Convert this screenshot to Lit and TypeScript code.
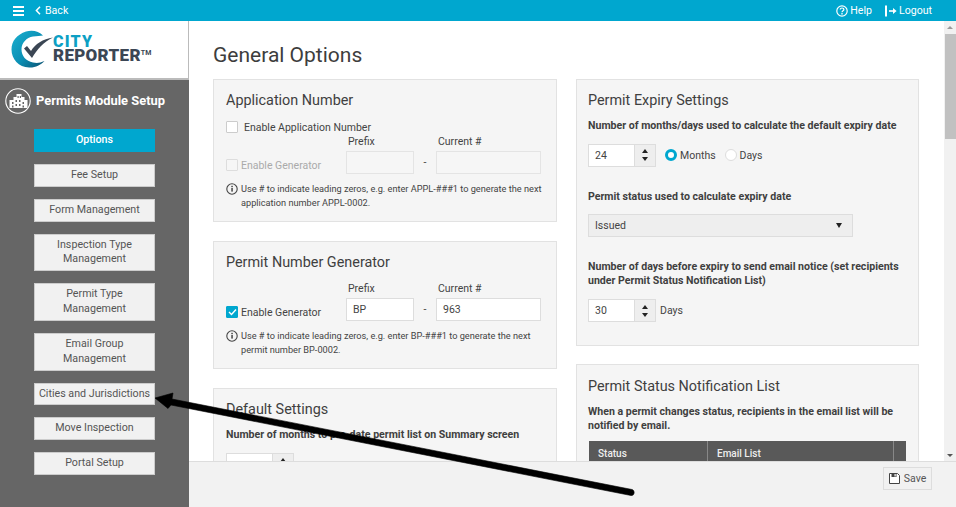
import { LitElement, html, css, svg } from "lit";
import { customElement } from "lit/decorators.js";

const info = html`<svg class="info" viewBox="0 0 12 12" width="12" height="12"><circle cx="6" cy="6" r="5.2" fill="none" stroke="#444" stroke-width="1.1"/><rect x="5.3" y="5" width="1.5" height="3.6" fill="#444"/><rect x="5.3" y="2.8" width="1.5" height="1.4" fill="#444"/></svg>`;

const stepper = (v: string) => html`<span class="num"><span class="numval">${v}</span><span class="step"><i class="up"></i><i class="down"></i></span></span>`;

@customElement("app-root")
export class AppRoot extends LitElement {
  static styles = css`
    :host { display: block; position: relative; width: 956px; height: 507px; overflow: hidden; background: #fff; font-family: Roboto, "Liberation Sans", sans-serif; font-size: 10.5px; color: #444; }
    * { box-sizing: border-box; }
    .top { height: 21px; background: #00a7cf; color: #fff; display: flex; align-items: center; padding: 0 24px 0 13px; font-size: 10.6px; }
    .burger { display: block; margin-right: 11px; }
    .back { display: flex; align-items: center; gap: 4px; }
    .spacer { flex: 1; }
    .tl { display: flex; align-items: center; gap: 2px; margin-left: 13px; }
    .body { display: flex; height: 486px; }
    .side { width: 189px; background: #666; flex: none; display: flex; flex-direction: column; }
    .logo { height: 59px; background: #fff; border-right: 1px solid #bbb; border-bottom: 2px solid #bbb; padding: 9px 0 0 11px; display: flex; }
    .logotext { margin-left: 0; font-weight: 900; line-height: 13.5px; padding-top: 5px; }
    .city { color: #0c9fc4; font-size: 16px; display: block; letter-spacing: 1.2px; }
    .rep { color: #3b4654; font-size: 17px; display: block; white-space: nowrap; letter-spacing: 0.3px; }
    .rep sup { font-size: 7px; font-weight: 700; vertical-align: 6px; line-height: 0; letter-spacing: 0; }
    .sidehead { display: flex; gap: 5px; padding: 8px 0 0 5px; color: #fff; font-weight: 700; font-size: 12.9px; height: 49px; align-items: flex-start; }
    .sidehead span { margin-top: 5px; }
    .btns { display: flex; flex-direction: column; gap: 12px; padding-left: 34px; }
    .btn { width: 121px; padding: 3px 2px; border: 1px solid #ccc; background: #f1f1f1; color: #555; text-align: center; font-size: 10.7px; line-height: 14.85px; }
    .btn.active { background: #00a7cf; border-color: #00a7cf; color: #fff; font-weight: 500; }
    .main { flex: 1; display: flex; flex-direction: column; min-width: 0; }
    .scrollwrap { height: 440px; display: flex; overflow: hidden; }
    .content { flex: 1; padding: 19px 0 0 24px; overflow: hidden; }
    h1 { margin: 0 0 9px; font-weight: 400; font-size: 21px; line-height: 30px; color: #3d3d3d; }
    .cols { display: flex; gap: 19px; align-items: flex-start; }
    .col { display: flex; flex-direction: column; }
    .col.l { width: 344px; gap: 19px; }
    .col.r { width: 343px; gap: 18px; }
    .card { background: #f5f5f5; border: 1px solid #e2e2e2; padding: 11px 11px 0 12px; }
    .col.r .card { padding-left: 11px; }
    .col.r .card.n2 { padding-top: 12px; }
    h3 { margin: 0; font-weight: 400; font-size: 14.4px; line-height: 20px; color: #3f3f3f; }
    .check { display: block; width: 12px; height: 12px; background: #fff; border: 1px solid #ccc; border-radius: 1px; flex: none; }
    .check.dis { background: #f6f6f6; border-color: #ddd; }
    .check.on { background: #00a7cf; border-color: #00a7cf; display: flex; align-items: center; justify-content: center; }
    .row1 { display: flex; align-items: center; gap: 6px; height: 14px; margin-top: 9px; }
    .gen { display: grid; grid-template-columns: 120px 68px 22px 105px; grid-template-rows: 14px 23px; row-gap: 3px; align-items: center; }
    .gen.m { margin-top: 8px; }
    .gen .lab { padding-left: 2px; }
    .gen .cb { grid-row: 2; display: flex; gap: 3px; align-items: center; margin-top: 5px; }
    .gen .cb.dis { color: #aaa; }
    .gen .dash { text-align: center; grid-row: 2; grid-column: 3; }
    .inp { grid-row: 2; height: 23px; background: #fff; border: 1px solid #ddd; padding: 0 6px; line-height: 21px; }
    .inp.dis { background: #f6f6f6; border-color: #e4e4e4; }
    .note { display: flex; gap: 3px; margin-top: 8px; font-size: 9.2px; line-height: 13.5px; padding-bottom: 12px; }
    .note .info { flex: none; margin-top: 1px; }
    .c1 { height: 143px; }
    .b { font-weight: 700; color: #3f3f3f; font-size: 10.6px; line-height: 13.5px; margin: 0; }
    .num { display: inline-flex; width: 68px; height: 23px; border: 1px solid #ddd; background: #fff; flex: none; }
    .numval { width: 46px; padding-left: 6px; line-height: 21px; }
    .step { width: 21px; background: #eee; border-left: 1px solid #ddd; display: flex; flex-direction: column; align-items: center; justify-content: center; gap: 4px; }
    .step i { display: block; width: 0; height: 0; border-left: 3px solid transparent; border-right: 3px solid transparent; }
    .step .up { border-bottom: 4px solid #222; }
    .step .down { border-top: 4px solid #222; }
    .inline { display: flex; align-items: center; }
    .radio { width: 12px; height: 12px; border-radius: 50%; background: #fff; border: 1px solid #ddd; flex: none; }
    .radio.on { border: 3.5px solid #00a7cf; }
    .select { width: 265px; height: 23px; background: #eee; border: 1px solid #ddd; display: flex; align-items: center; justify-content: space-between; padding: 0 10px 0 6px; margin-top: 11px; }
    .select i { width: 0; height: 0; border-left: 3.5px solid transparent; border-right: 3.5px solid transparent; border-top: 5px solid #222; }
    .thead { display: flex; margin: 9px 0 0 1px; height: 30px; width: 317px; background: #595959; color: #eee; font-weight: 500; font-size: 10px; line-height: 26px; }
    .thead div { padding-left: 9px; border-right: 1px solid #888; }
    .thead .a { width: 119px; }
    .thead .e { width: 186px; }
    .scroll { width: 12px; background: #f1f1f1; display: flex; flex-direction: column; align-items: center; flex: none; }
    .scroll .u, .scroll .d { height: 12px; width: 12px; display: flex; align-items: center; justify-content: center; }
    .scroll .u i { border-left: 3px solid transparent; border-right: 3px solid transparent; border-bottom: 3px solid #999; width: 0; height: 0; }
    .scroll .d i { border-left: 3px solid transparent; border-right: 3px solid transparent; border-top: 3px solid #555; width: 0; height: 0; }
    .thumb { width: 11px; height: 105px; background: #c1c1c1; margin-top: 1px; }
    .scroll .fill { flex: 1; }
    .foot { height: 46px; background: #f2f2f2; border-top: 1px solid #ddd; display: flex; justify-content: flex-end; padding: 5px 24px 0 0; }
    .save { height: 23px; width: 49px; border: 1px solid #ddd; background: #f1f1f1; display: flex; align-items: center; justify-content: center; gap: 4px; color: #555; }
    .arrow { position: absolute; left: 0; top: 0; pointer-events: none; }
  `;

  render() {
    const side = ["Fee Setup", "Form Management", "Inspection Type Management", "Permit Type Management", "Email Group Management", "Cities and Jurisdictions", "Move Inspection", "Portal Setup"];
    return html`
      <div class="top">
        <svg class="burger" width="11" height="10" viewBox="0 0 11 10"><path d="M0 1h11M0 5h11M0 9h11" stroke="#fff" stroke-width="2"/></svg>
        <span class="back"><svg width="6" height="9" viewBox="0 0 6 9"><path d="M5 .8 1.4 4.5 5 8.2" fill="none" stroke="#fff" stroke-width="1.5"/></svg>Back</span>
        <span class="spacer"></span>
        <span class="tl"><svg width="12" height="12" viewBox="0 0 12 12"><circle cx="6" cy="6" r="5.2" fill="none" stroke="#fff" stroke-width="1.2"/><path d="M4.2 4.6C4.2 2.4 7.9 2.5 7.9 4.5 7.9 5.8 6 5.7 6 7.3" fill="none" stroke="#fff" stroke-width="1.2"/><rect x="5.3" y="8.1" width="1.4" height="1.4" fill="#fff"/></svg>Help</span>
        <span class="tl"><svg width="12" height="12" viewBox="0 0 12 12"><rect x="0" y="0.5" width="2" height="11" fill="#fff"/><path d="M4 6h5" stroke="#fff" stroke-width="1.6"/><path d="M8 3l3.6 3L8 9z" fill="#fff"/></svg>Logout</span>
      </div>
      <div class="body">
        <aside class="side">
          <div class="logo">
            <svg width="42" height="40" viewBox="0 0 42 40">
              <defs><linearGradient id="g" x1="0" y1="0" x2="1" y2="1"><stop offset="0" stop-color="#1ab0d0"/><stop offset=".55" stop-color="#0b8fb4"/><stop offset="1" stop-color="#0d4f6e"/></linearGradient></defs>
              <path d="M32 5.500C28 1 21 -.5 15 1.500 6 4.500 .5 11 .5 19.500 .5 29 8 38 19 37.500 25 37.500 29.500 35 33.500 31 29 33 26 33.500 22 32.500 15 31 10.500 26 10.500 19.500 10.500 13 15.500 7.500 22 6.500 26 6 29 6 32 5.500Z" fill="url(#g)"/>
              <path d="M13 18.500 16 16 20 21C24 14 32 9 42 7.500 33 12 26 19 21 28Z" fill="#3b4654"/>
            </svg>
            <div class="logotext"><span class="city">CITY</span><span class="rep">REPORTER<sup>TM</sup></span></div>
          </div>
          <div class="sidehead">
            <svg width="26" height="26" viewBox="0 0 26 26" style="flex:none"><circle cx="13" cy="13" r="12.2" fill="#666" stroke="#fff" stroke-width="1.1"/><path d="M4.500 12h4V9h3V6h5v3h3v3h3v8h-18z" fill="#fff"/><path d="M12.500 8h1.200v2h-1.200zM14.800 8H16v2h-1.200zM7 14h1.500v2H7zM10.500 12h1.500v2h-1.500zM14 12h1.500v2H14zM17.500 14H19v2h-1.500zM10.500 16h1.500v2h-1.500zM14 16h1.500v2H14zM7 17.500h1.500v2H7zM17.500 17.500H19v2h-1.500z" fill="#666"/></svg>
            <span>Permits Module Setup</span>
          </div>
          <div class="btns">
            <div class="btn active">Options</div>
            ${side.map((s) => html`<div class="btn">${s}</div>`)}
          </div>
        </aside>
        <section class="main">
          <div class="scrollwrap">
            <div class="content">
              <h1>General Options</h1>
              <div class="cols">
                <div class="col l">
                  <div class="card c1">
                    <h3>Application Number</h3>
                    <div class="row1"><span class="check"></span>Enable Application Number</div>
                    <div class="gen">
                      <span class="lab" style="grid-column:2">Prefix</span><span class="lab" style="grid-column:4">Current #</span>
                      <span class="cb dis"><span class="check dis"></span>Enable Generator</span>
                      <span class="inp dis" style="grid-column:2"></span><span class="dash">-</span><span class="inp dis" style="grid-column:4"></span>
                    </div>
                    <div class="note">${info}<span>Use # to indicate leading zeros, e.g. enter APPL-###1 to generate the next application number APPL-0002.</span></div>
                  </div>
                  <div class="card">
                    <h3>Permit Number Generator</h3>
                    <div class="gen m">
                      <span class="lab" style="grid-column:2">Prefix</span><span class="lab" style="grid-column:4">Current #</span>
                      <span class="cb"><span class="check on"><svg width="9" height="8" viewBox="0 0 9 8"><path d="M1 4l2.500 2.500L8 1.500" fill="none" stroke="#fff" stroke-width="1.400"/></svg></span>Enable Generator</span>
                      <span class="inp" style="grid-column:2">BP</span><span class="dash">-</span><span class="inp" style="grid-column:4">963</span>
                    </div>
                    <div class="note">${info}<span>Use # to indicate leading zeros, e.g. enter BP-###1 to generate the next permit number BP-0002.</span></div>
                  </div>
                  <div class="card">
                    <h3>Default Settings</h3>
                    <p class="b" style="margin-top:8px">Number of months to pre-date permit list on Summary screen</p>
                    <div class="inline" style="margin-top:11px">${stepper("")}</div>
                  </div>
                </div>
                <div class="col r">
                  <div class="card" style="height:267px">
                    <h3>Permit Expiry Settings</h3>
                    <p class="b" style="margin-top:8px">Number of months/days used to calculate the default expiry date</p>
                    <div class="inline" style="margin-top:11px">${stepper("24")}
                      <span class="radio on" style="margin-left:9px"></span><span style="margin-left:3px">Months</span>
                      <span class="radio" style="margin-left:9px"></span><span style="margin-left:3px">Days</span></div>
                    <p class="b" style="margin-top:23px">Permit status used to calculate expiry date</p>
                    <div class="select">Issued<i></i></div>
                    <p class="b" style="margin-top:23px">Number of days before expiry to send email notice (set recipients under Permit Status Notification List)</p>
                    <div class="inline" style="margin-top:12px">${stepper("30")}<span style="margin-left:4px">Days</span></div>
                  </div>
                  <div class="card n2">
                    <h3>Permit Status Notification List</h3>
                    <p class="b" style="margin-top:8px">When a permit changes status, recipients in the email list will be notified by email.</p>
                    <div class="thead"><div class="a">Status</div><div class="e">Email List</div></div>
                  </div>
                </div>
              </div>
            </div>
            <div class="scroll"><div class="u"><i></i></div><div class="thumb"></div><div class="fill"></div><div class="d"><i></i></div></div>
          </div>
          <div class="foot">
            <div class="save"><svg width="11" height="11" viewBox="0 0 11 11"><path d="M.5.5h8l2 2v8H.5z" fill="#fff" stroke="#444"/><rect x="2.500" y=".5" width="5" height="3.500" fill="#444"/><rect x="5.500" y="1" width="1.200" height="2.500" fill="#fff"/></svg>Save</div>
          </div>
        </section>
      </div>
      <svg class="arrow" width="956" height="507" viewBox="0 0 956 507">
        ${svg`<path d="M155 398 173 393 172 399 632 489.500C635 490 635 496 631 495.500L171 405 168 408.500Z" fill="#000" stroke="#000" stroke-width=".6" stroke-linejoin="round"/>`}
      </svg>
    `;
  }
}
